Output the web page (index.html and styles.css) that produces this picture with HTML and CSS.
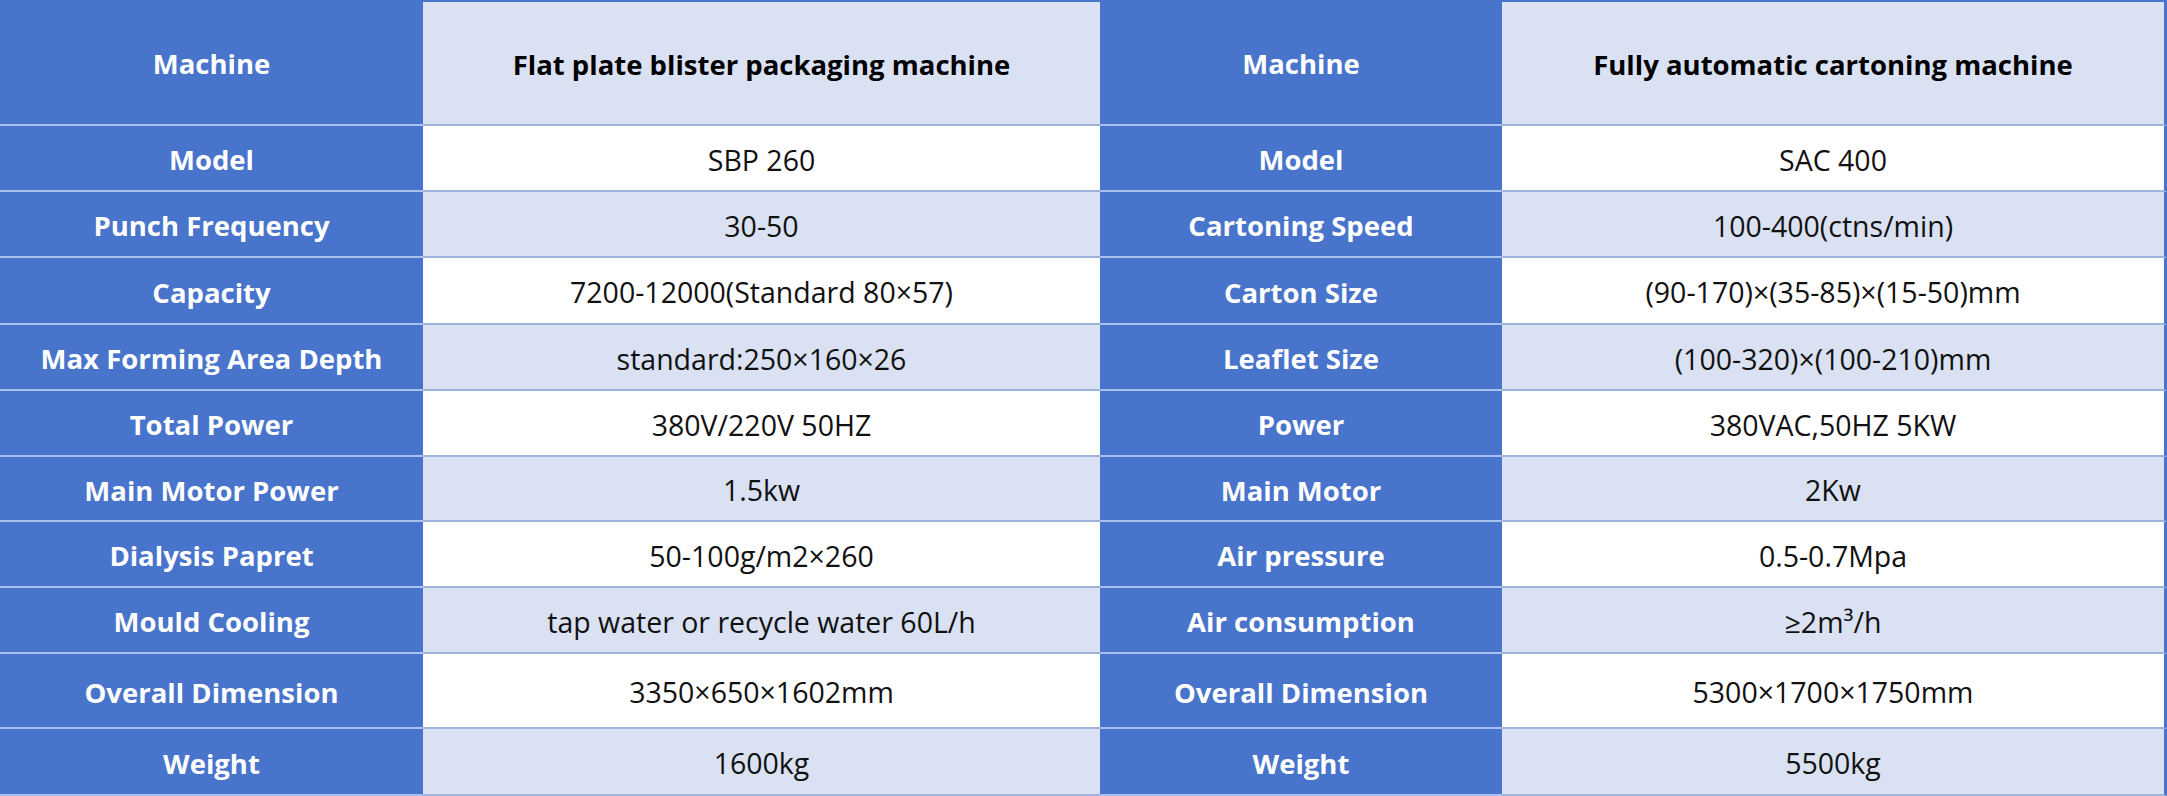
FILE: index.html
```html
<!DOCTYPE html>
<html lang="en">
<head>
<meta charset="utf-8">
<title>Machine specifications</title>
<link rel="stylesheet" href="styles.css">
</head>
<body>
<div class="spec">
  <div class="cell label h-head">Machine</div>
  <div class="cell data tint h-head head">Flat plate blister packaging machine</div>
  <div class="cell label h-head">Machine</div>
  <div class="cell data tint h-head head last">Fully automatic cartoning machine</div>

  <div class="cell label">Model</div>
  <div class="cell data">SBP 260</div>
  <div class="cell label">Model</div>
  <div class="cell data last">SAC 400</div>

  <div class="cell label">Punch Frequency</div>
  <div class="cell data tint">30-50</div>
  <div class="cell label">Cartoning Speed</div>
  <div class="cell data tint last">100-400(ctns/min)</div>

  <div class="cell label">Capacity</div>
  <div class="cell data">7200-12000(Standard 80×57)</div>
  <div class="cell label">Carton Size</div>
  <div class="cell data last">(90-170)×(35-85)×(15-50)mm</div>

  <div class="cell label">Max Forming Area Depth</div>
  <div class="cell data tint">standard:250×160×26</div>
  <div class="cell label">Leaflet Size</div>
  <div class="cell data tint last">(100-320)×(100-210)mm</div>

  <div class="cell label">Total Power</div>
  <div class="cell data">380V/220V 50HZ</div>
  <div class="cell label">Power</div>
  <div class="cell data last">380VAC,50HZ 5KW</div>

  <div class="cell label">Main Motor Power</div>
  <div class="cell data tint">1.5kw</div>
  <div class="cell label">Main Motor</div>
  <div class="cell data tint last">2Kw</div>

  <div class="cell label">Dialysis Papret</div>
  <div class="cell data">50-100g/m2×260</div>
  <div class="cell label">Air pressure</div>
  <div class="cell data last">0.5-0.7Mpa</div>

  <div class="cell label">Mould Cooling</div>
  <div class="cell data tint">tap water or recycle water 60L/h</div>
  <div class="cell label">Air consumption</div>
  <div class="cell data tint last">≥2m³/h</div>

  <div class="cell label">Overall Dimension</div>
  <div class="cell data">3350×650×1602mm</div>
  <div class="cell label">Overall Dimension</div>
  <div class="cell data last">5300×1700×1750mm</div>

  <div class="cell label">Weight</div>
  <div class="cell data tint">1600kg</div>
  <div class="cell label">Weight</div>
  <div class="cell data tint last">5500kg</div>
</div>
</body>
</html>
```
FILE: styles.css
```css
html, body {
  margin: 0;
  padding: 0;
  background: #ffffff;
}

.spec {
  display: grid;
  grid-template-columns: 423px 677px 402px 665px;
  grid-template-rows: 126px 66px 66px 67px 66px 66px 65px 66px 66px 75px 67px;
  width: 2167px;
  height: 796px;
  font-family: "Open Sans", "Noto Sans", sans-serif;
  font-size: 28.5px;
}

.cell {
  display: flex;
  align-items: center;
  justify-content: center;
  text-align: center;
  box-sizing: border-box;
  padding-top: 3px;
  border-bottom: 2px solid #9fb3df;
}

.label {
  background: #4874cb;
  color: #ffffff;
  font-weight: 700;
  font-size: 27.5px;
  border-bottom-color: #a9c1ee;
}

.data {
  background: #ffffff;
  color: #111111;
  font-weight: 400;
}

.data.tint {
  background: #d9e1f2;
}

.head {
  font-weight: 700;
  font-size: 27.5px;
  color: #000000;
  border-top: 2px solid #4874cb;
}

.last {
  border-right: 3px solid #4874cb;
}
```
